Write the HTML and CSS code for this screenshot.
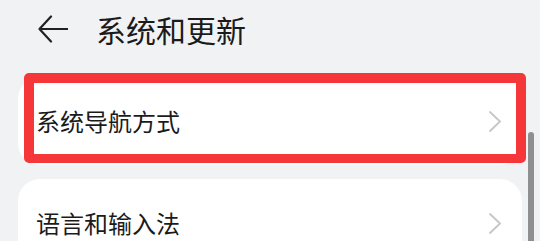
FILE: index.html
```html
<!DOCTYPE html>
<html lang="zh-CN">
<head>
    <meta charset="UTF-8">
    <meta name="viewport" content="width=device-width, initial-scale=1.0">
    <title>系统和更新</title>
    <link rel="stylesheet" href="styles.css">
</head>
<body>
    <div class="header">
        <svg class="back" width="30" height="28" viewBox="0 0 30 28">
            <path d="M13 1.5 L1.5 14 L13 26.5 M1.5 14 H29.5" fill="none" stroke="#222" stroke-width="2.2" stroke-linecap="round" stroke-linejoin="round"/>
        </svg>
        <h1 class="title">系统和更新</h1>
    </div>

    <div class="list">
        <div class="card">
            <span class="label">系统导航方式</span>
            <svg class="chevron" width="12" height="21" viewBox="0 0 12 21">
                <path d="M1 1 L11 10.5 L1 20" fill="none" stroke="#c6c6c6" stroke-width="1.8" stroke-linecap="round" stroke-linejoin="round"/>
            </svg>
        </div>
        <div class="card">
            <span class="label">语言和输入法</span>
            <svg class="chevron" width="12" height="21" viewBox="0 0 12 21">
                <path d="M1 1 L11 10.5 L1 20" fill="none" stroke="#c6c6c6" stroke-width="1.8" stroke-linecap="round" stroke-linejoin="round"/>
            </svg>
        </div>
    </div>

    <!-- annotation + scrollbar overlays -->
    <div class="highlight"></div>
    <div class="scrollbar"></div>
</body>
</html>
```

FILE: styles.css
```css
html { overflow: hidden; }
body {
    margin: 0;
    background-color: #f1f2f4;
    font-family: "Noto Sans CJK SC", "Noto Sans", sans-serif;
    color: #1b1b1b;
    height: 241px;
    overflow: hidden;
    position: relative;
}

/* EN-TETE */
.header {
    display: flex;
    align-items: center;
    height: 57px;
    padding-left: 38px;
}
.back { flex: none; }
.title {
    margin: 0 0 0 28px;
    font-size: 30px;
    font-weight: 400;
    line-height: 1;
}

/* LISTE */
.list {
    display: flex;
    flex-direction: column;
    gap: 14px;
    padding: 20px 18px 0 18px;
}
.card {
    display: flex;
    flex: none;
    align-items: center;
    justify-content: space-between;
    height: 88px;
    background-color: #fff;
    border-radius: 22px;
    padding: 0 21px 0 18px;
}
.label {
    font-size: 24px;
    line-height: 1;
}
.chevron { flex: none; }

/* CADRE ROUGE */
.highlight {
    position: absolute;
    left: 24px;
    top: 73px;
    width: 482px;
    height: 71px;
    border: 10px solid #f5373a;
    border-bottom-width: 9px;
    border-radius: 5px;
}

.scrollbar {
    position: absolute;
    left: 528px;
    top: 132px;
    width: 6px;
    height: 109px;
    border-radius: 3px 3px 0 0;
    background-color: #8f8f8f;
}
```
